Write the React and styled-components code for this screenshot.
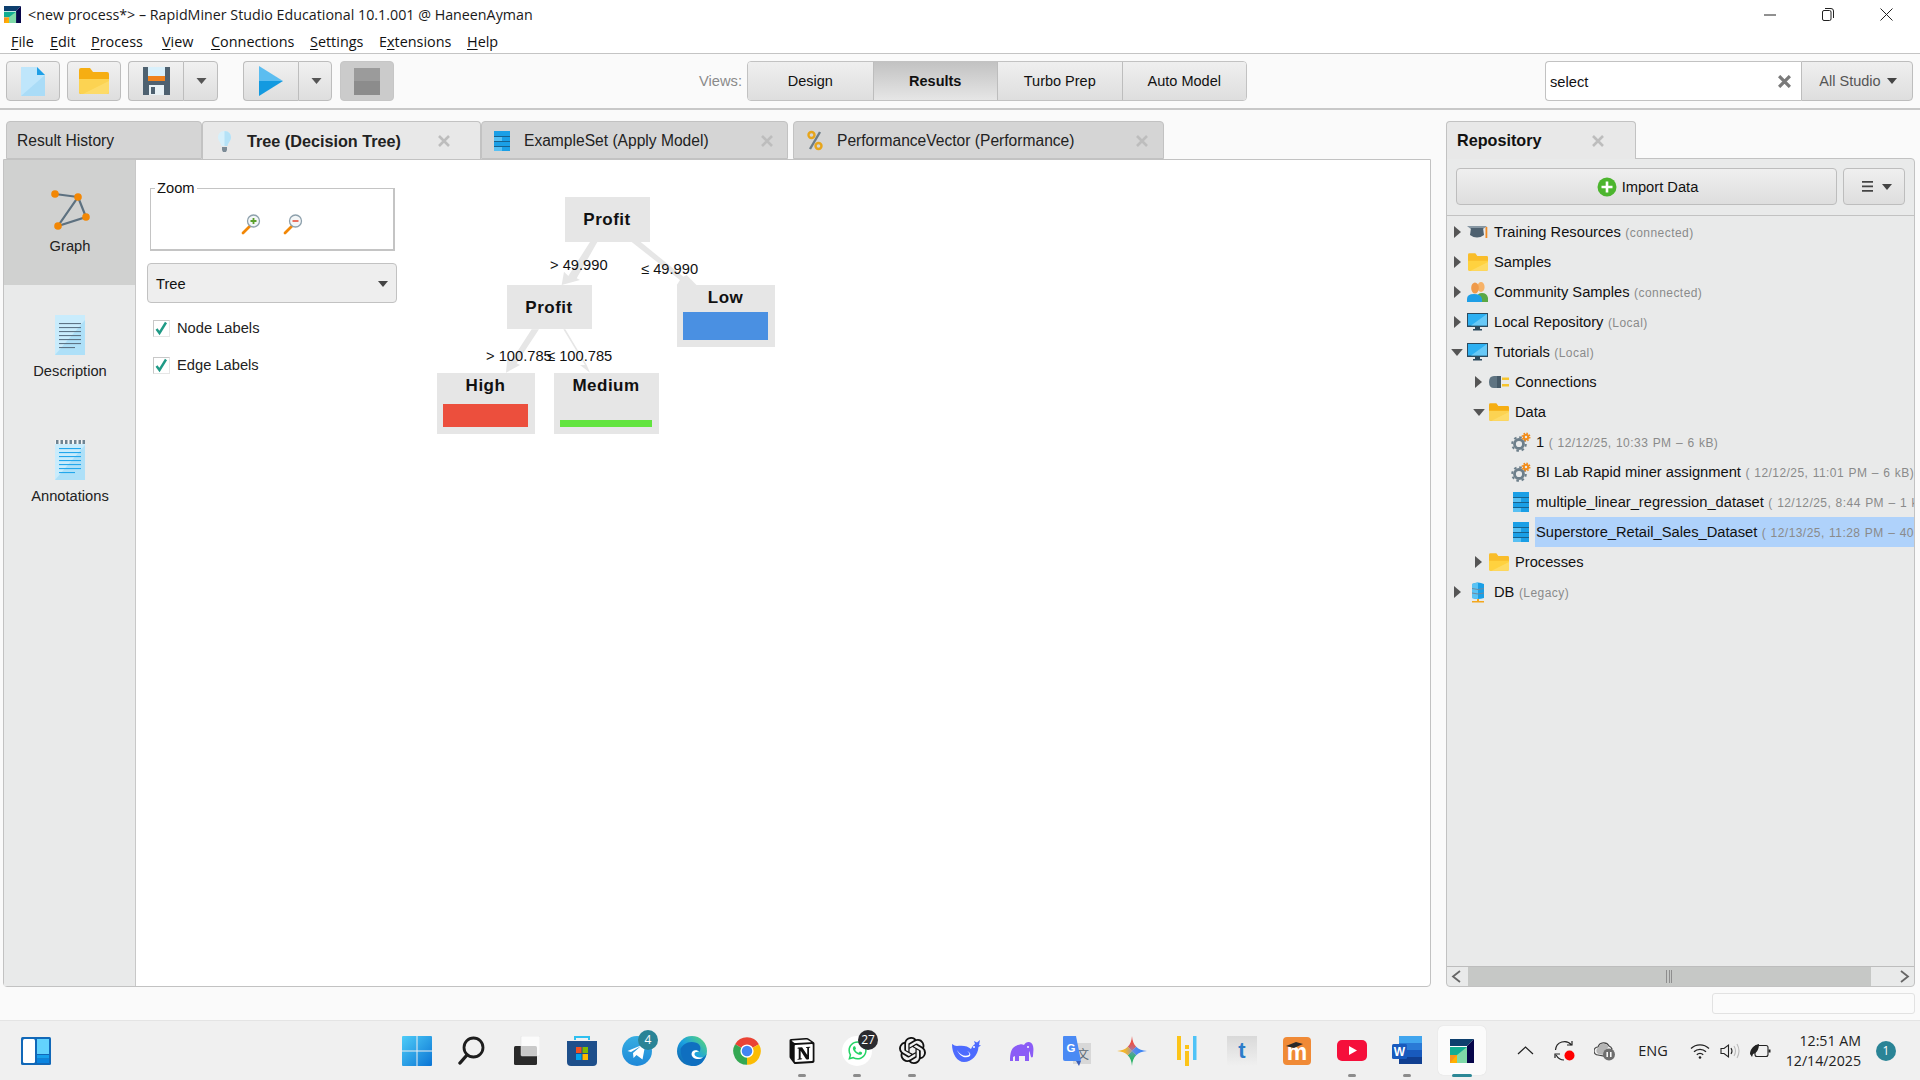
import React from "react";
import styled, { createGlobalStyle } from "styled-components";
import { SiNotion, SiOpenai } from "react-icons/si";
import { FaWhatsapp } from "react-icons/fa";

const Global = createGlobalStyle`
  html, body { margin: 0; padding: 0; background: #fafafa; }
  body { width: 1920px; height: 1080px; overflow: hidden; font-family: "Liberation Sans", Arial, sans-serif; color: #111; }
  * { box-sizing: border-box; }
`;

const Page = styled.div`display: flex; flex-direction: column; width: 1920px; height: 1080px; overflow: hidden;`;

/* ---------- title + menu ---------- */
const TitleBar = styled.div`display: flex; align-items: center; height: 29px; background: #fff; padding: 0 5px 0 4px; flex: none;`;
const TitleText = styled.span`font: 14.28px "Open Sans", sans-serif; margin: -1px 0 0 7px; color: #1a1a1a; white-space: nowrap;`;
const WindowButtons = styled.div`display: flex; margin-left: auto; height: 29px;`;
const WindowButton = styled.div`width: 58px; display: flex; align-items: center; justify-content: center; color: #222;`;
const MenuBar = styled.div`display: flex; height: 25px; padding: 2px 0 1px 0; background: #fff; border-bottom: 1px solid #c4c4c4; flex: none; align-items: center;`;
const MenuItem = styled.span`font: 14.4px "Open Sans", sans-serif; color: #111; position: absolute; left: ${p => p.$x}px; u { text-decoration-thickness: 1px; text-underline-offset: 2px; }`;
const MenuRow = styled.div`position: relative; height: 20px; width: 100%; line-height: 20px;`;

/* ---------- toolbar ---------- */
const Toolbar = styled.div`display: flex; align-items: center; height: 56px; padding: 0 7px 0 6px; background: #fafafa; border-bottom: 2px solid #c8c8c8; flex: none;`;
const ToolButton = styled.button`
  width: ${p => p.$w || 54}px; height: 40px; padding: 0 0 0 ${p => p.$pl || 0}px; margin-left: ${p => p.$ml || 0}px;
  display: flex; align-items: center; justify-content: center;
  border: 1px solid #bdbdbd; border-radius: 4px;
  background: linear-gradient(#f1f1f1, #dedede);
`;
const StopButton = styled(ToolButton)`background: #cbcbcb; border-color: #c6c6c6;`;
const SplitGroup = styled.div`display: flex; margin-left: ${p => p.$ml}px;
  & > button:first-child { border-radius: 4px 0 0 4px; border-right: 0; }
  & > button:last-child { border-radius: 0 4px 4px 0; }
`;
const ViewsLabel = styled.span`margin-left: 305px; width: 48px; font-size: 14.7px; color: #8a8a8a;`;
const ViewGroup = styled.div`display: flex; height: 40px; border: 1px solid #c2c2c2; border-radius: 4px; overflow: hidden; width: 500px;`;
const ViewButton = styled.div`
  width: 125px; display: flex; align-items: center; justify-content: center; font-size: 14.5px;
  font-weight: ${p => (p.$active ? 700 : 400)};
  background: ${p => (p.$active ? "linear-gradient(#c2c2c2, #e6e6e6)" : "linear-gradient(#efefef, #dedede)")};
  border-left: ${p => (p.$first ? "0" : "1px solid #bdbdbd")};
`;
const SearchBox = styled.div`display: flex; align-items: center; width: 256px; height: 40px; margin-left: 298px; background: #fff; border: 1px solid #c2c2c2; border-right: 0; border-radius: 4px 0 0 4px; padding: 0 10px 0 4px;`;
const SearchInput = styled.input`flex: 1; min-width: 0; border: 0; outline: 0; background: transparent; font: 14.7px "Liberation Sans", sans-serif; color: #111; padding: 1px 0 0;`;
const ScopeButton = styled.div`width: 112px; height: 40px; display: flex; align-items: center; justify-content: center; gap: 6px; padding-left: 2px; font-size: 14.5px; color: #555; border: 1px solid #bdbdbd; border-radius: 0 4px 4px 0; background: linear-gradient(#efefef, #dedede);`;

/* ---------- workspace ---------- */
const Workspace = styled.div`flex: 1; min-height: 0; display: flex; padding: 11px 5px 0 3px; background: #fafafa;`;
const ResultsColumn = styled.div`width: 1428px; display: flex; flex-direction: column;`;
const TabStrip = styled.div`display: flex; height: 38px; flex: none; padding-left: 3px;`;
const Tab = styled.div`
  display: flex; align-items: center; width: ${p => p.$w}px; height: 38px; margin-left: ${p => p.$ml || 0}px;
  padding: 1px ${p => p.$pr || 16}px 0 ${p => p.$pl || 12}px;
  background: ${p => (p.$active ? "#e8e8e8" : "#d5d5d5")};
  border: 1px solid #c2c2c2; border-bottom: ${p => (p.$active ? "0" : "1px solid #c2c2c2")}; border-radius: 4px 4px 0 0;
  font-size: ${p => (p.$active ? 16.2 : 15.6)}px; font-weight: ${p => (p.$active ? 700 : 400)}; white-space: nowrap; color: #222;
`;
const TabIcon = styled.span`width: 30px; display: flex; align-items: center; flex: none;`;
const TabClose = styled.span`margin-left: auto; display: flex;`;
const ResultPanel = styled.div`flex: 1; min-height: 0; display: flex; background: #fff; border: 1px solid #c2c2c2; border-radius: 0 0 4px 4px;`;
const SideNav = styled.div`width: 132px; flex: none; background: #e9eaea; border-right: 1px solid #c8c8c8;`;
const SideItem = styled.div`height: 125px; display: flex; flex-direction: column; align-items: center; padding: 30px 0 0 1px; background: ${p => (p.$active ? "#d0d1d0" : "transparent")}; font-size: 14.7px; color: #222;`;
const SideLabel = styled.span`margin-top: 8px;`;
const Controls = styled.div`width: 265px; flex: none; padding: 19px 0 0 11px; display: flex; flex-direction: column;`;
const ZoomBox = styled.fieldset`
  margin: 0 0 0 3px; padding: 0; width: 245px; height: 72px; border: 2px solid #c4c4c4; border-width: 1px 2px 2px 1px;
  display: flex; min-inline-size: 0;
  legend { font-size: 14.7px; margin-left: 4px; padding: 0 2px; line-height: 18px; }
`;
const ZoomIcons = styled.div`display: flex; gap: 22px; padding: 17px 0 0 90px;`;
const SelectBox = styled.div`display: flex; align-items: center; justify-content: space-between; width: 250px; height: 40px; margin-top: 12px; padding: 2px 8px 0 8px; background: #eee; border: 1px solid #c2c2c2; border-radius: 4px; font-size: 14.7px;`;
const CheckRow = styled.div`display: flex; align-items: center; gap: 7px; height: 18px; margin: ${p => p.$mt}px 0 0 6px; font-size: 14.7px; color: #222;`;
const CheckMark = styled.span`display: flex; width: 17px; height: 17px; background: #fff; border: 1px solid #c8c8c8; border-right-color: #e6e6e6; border-bottom-color: #e6e6e6;`;

const TreeCanvas = styled.div`position: relative; flex: 1;`;
const EdgeLayer = styled.svg`position: absolute; left: 19px; top: 20px;`;
const TreeNode = styled.div`
  position: absolute; left: ${p => p.$x}px; top: ${p => p.$y}px; width: ${p => p.$w}px; height: ${p => p.$h}px;
  display: flex; flex-direction: column; align-items: center; background: #e6e6e6;
  font-size: 17px; font-weight: 700; letter-spacing: 0.5px; color: #111; line-height: 24px;
  padding: ${p => p.$pt}px 7px 0 6px;
`;
const LeafBar = styled.div`margin-top: auto; margin-bottom: ${p => p.$mb}px; width: 100%; height: ${p => p.$h}px; background: ${p => p.$c};`;
const EdgeLabel = styled.span`position: absolute; left: ${p => p.$x}px; top: ${p => p.$y}px; font-size: 14.7px; line-height: 16px; white-space: nowrap; color: #111;`;

/* ---------- repository ---------- */
const RepoColumn = styled.div`width: 469px; margin-left: 15px; display: flex; flex-direction: column;`;
const RepoTab = styled.div`display: flex; align-items: center; width: 190px; height: 38px; flex: none; padding: 0 31px 0 10px; background: #e8e8e8; border: 1px solid #c2c2c2; border-bottom: 0; border-radius: 4px 4px 0 0; font-size: 16.2px; font-weight: 700; position: relative; z-index: 1; margin-bottom: -1px;`;
const RepoPanel = styled.div`flex: 1; min-height: 0; display: flex; flex-direction: column; background: #e9eaea; border: 1px solid #c2c2c2; border-radius: 0 4px 4px 4px;`;
const RepoActions = styled.div`display: flex; gap: 6px; height: 57px; flex: none; padding: 9px 9px 10px 9px; border-bottom: 1px solid #c2c2c2;`;
const ImportButton = styled.div`flex: 1; display: flex; align-items: center; justify-content: center; gap: 5px; padding-left: 2px; background: linear-gradient(#efefef, #dedede); border: 1px solid #bdbdbd; border-radius: 4px; font-size: 14.7px;`;
const RepoMenuButton = styled.div`width: 62px; display: flex; align-items: center; justify-content: center; gap: 9px; padding-left: 5px; background: linear-gradient(#efefef, #dedede); border: 1px solid #bdbdbd; border-radius: 4px;`;
const RepoTree = styled.div`flex: 1; min-height: 0; padding-top: 1px; overflow: hidden;`;
const RepoRow = styled.div`display: flex; align-items: center; height: 30px; padding-left: ${p => 2 + p.$level * 21.5}px; white-space: nowrap; overflow: hidden;`;
const CaretCell = styled.span`width: 16px; flex: none; display: flex; justify-content: center;`;
const RowIcon = styled.span`width: 24px; flex: none; display: flex; justify-content: center; align-items: center; margin-right: 3px; padding-left: 1px;`;
const RowLabel = styled.span`flex: 1; min-width: 0; height: 30px; line-height: 31px; padding-left: ${p => (p.$level === 2 ? 1 : p.$level === 1 ? 1.5 : 2)}px; font-size: 14.7px; color: #111; overflow: hidden; background: ${p => (p.$selected ? "#afd2fb" : "transparent")};`;
const RowMeta = styled.span`font-size: 12px; letter-spacing: 0.45px; word-spacing: 0.6px; color: #8a8a8a; margin-left: 4.5px;`;
const HScroll = styled.div`display: flex; height: 20px; flex: none; border-top: 1px solid #bdbdbd; align-items: stretch;`;
const ScrollEnd = styled.div`width: ${p => p.$w}px; display: flex; align-items: center; justify-content: ${p => p.$j}; padding: 0 4px; flex: ${p => (p.$grow ? 1 : "none")};`;
const ScrollThumb = styled.div`width: 403px; background: #c6c8c6; display: flex; align-items: center; justify-content: center;`;
const Grip = styled.div`width: 8px; height: 13px; background: repeating-linear-gradient(90deg, #8e8e8e 0 1px, transparent 1px 2.6px);`;

/* ---------- status + taskbar ---------- */
const StatusBar = styled.div`display: flex; justify-content: flex-end; height: 33px; flex: none; padding: 6px 5px 0 0; background: #fafafa;`;
const StatusField = styled.div`width: 203px; height: 21px; border: 1px solid #e2e2e2; border-radius: 3px; background: #fbfbfb;`;
const Taskbar = styled.div`display: flex; align-items: center; height: 60px; flex: none; background: #f0f0f0; border-top: 1px solid #e4e4e4;`;
const TaskCell = styled.div`position: relative; width: 55px; height: 59px; flex: none; display: flex; align-items: center; justify-content: center; margin-left: ${p => p.$ml || 0}px;`;
const ActiveBack = styled.div`position: absolute; left: 3px; right: 4px; top: 5px; bottom: 5px; background: #fbfbfb; border-radius: 5px; box-shadow: 0 0 1px #ccc;`;
const IconHolder = styled.div`position: relative; display: flex; color: ${p => p.$c || "inherit"};`;
const RunDot = styled.div`position: absolute; left: 50%; bottom: 3px; width: ${p => (p.$active ? 20 : 8)}px; height: 3px; margin-left: ${p => (p.$active ? -10 : -4)}px; border-radius: 2px; background: ${p => (p.$active ? "#2c8896" : "#8c8c8c")};`;
const Badge = styled.div`position: absolute; right: -6px; top: -6px; width: 20px; height: 20px; border-radius: 50%; display: flex; align-items: center; justify-content: center; background: ${p => (p.$d ? "#2b2b30" : "#2a8496")}; color: #fff; font: 12px "Open Sans", sans-serif;`;
const WhiteDisc = styled.div`width: 30px; height: 30px; border-radius: 50%; background: #fff; display: flex; align-items: center; justify-content: center; color: #25d366;`;
const NotionTile = styled.div`display: flex; background: linear-gradient(#fff, #fff) center / 20px 20px no-repeat;`;
const GreyTile = styled.div`width: 30px; height: 30px; background: linear-gradient(#d9d9d9, #f0f0f0); display: flex; align-items: center; justify-content: center; color: #2c7cc9; font: 700 22px "Liberation Sans", sans-serif;`;
const TrayCell = styled.div`width: ${p => p.$w}px; height: 59px; flex: none; display: flex; align-items: center; justify-content: center; margin-left: ${p => p.$ml || 0}px;`;
const TrayText = styled.span`font: 14.5px "Open Sans", sans-serif; color: #222;`;
const Clock = styled.div`width: 86px; flex: none; text-align: right; font: 14.2px/20px "Open Sans", sans-serif; color: #222; white-space: nowrap; display: flex; flex-direction: column;`;
const NotifyBadge = styled.div`width: 20px; height: 20px; margin-left: 15px; flex: none; border-radius: 50%; background: #2a8496; color: #fff; display: flex; align-items: center; justify-content: center; font: 12px "Open Sans", sans-serif;`;

/* ---------- icons ---------- */
const CaretDown = ({ w = 11, h = 6, c = "#555" }) => <svg width={w} height={h} viewBox="0 0 10 6"><path d="M0 0h10L5 6z" fill={c} /></svg>;
const CaretRight = () => <svg width="7" height="12" viewBox="0 0 7 12"><path d="M0 0l7 6-7 6z" fill="#555" /></svg>;
const CloseX = ({ s = 12, c = "#bdbdbd", w = 2.6 }) => <svg width={s} height={s} viewBox="0 0 12 12"><path d="M1 1l10 10M11 1L1 11" stroke={c} strokeWidth={w} /></svg>;
const AppLogo = ({ s = 24 }) => (
  <svg width={s} height={s} viewBox="0 0 24 24">
    <rect x="0" y="0" width="24" height="24" fill="#fff" />
    <path d="M0 0h24L17 7H0z" fill="#0d3f6e" />
    <path d="M24 0v24h-7V7z" fill="#07064a" />
    <path d="M0 8h17v16H7v-8H0z" fill="#12ad92" />
    <path d="M7 16l10-8v16H7z" fill="#7fd9a8" />
    <path d="M0 16h7v8H0z" fill="#f7931e" />
    <path d="M0 24l7-8v8z" fill="#ffb000" />
  </svg>
);
const NewDoc = () => <svg width="24" height="29" viewBox="0 0 24 29"><path d="M0 0h16l8 8v21H0z" fill="#bfe6fb" /><path d="M24 8v21H0z" fill="#aadcf7" /><path d="M16 0l8 8h-8z" fill="#1f9fe6" /></svg>;
const FolderIcon = ({ w = 30, h = 26, top = "#f6ae12", bottom = "#fcd352" }) => (
  <svg width={w} height={h} viewBox="0 0 30 26"><path d="M0 2q0-2 2-2h9l3 4h14q2 0 2 2v18q0 2-2 2H2q-2 0-2-2z" fill={top} /><path d="M0 11h30v13q0 2-2 2H2q-2 0-2-2z" fill={bottom} /><path d="M30 13L4 26h24q2 0 2-2z" fill="#fde17a" opacity=".6" /></svg>
);
const SaveIcon = () => <svg width="27" height="28" viewBox="0 0 27 28"><path d="M0 0h27v28H0z" fill="#4e6170" /><path d="M5 0h17v14H5z" fill="#d9f0fb" /><path d="M5 9h17v5H5z" fill="#f0821e" /><path d="M6 18h15v10H6z" fill="#e8f1f5" /><path d="M8 20h4v7H8z" fill="#4e6170" /></svg>;
const PlayIcon = () => <svg width="24" height="30" viewBox="0 0 24 30"><path d="M0 0l24 15H0z" fill="#5bbdf0" /><path d="M0 30l24-15H0z" fill="#139ae0" /></svg>;
const StopIcon = () => <svg width="26" height="27" viewBox="0 0 26 27"><path d="M0 0h26v13H0z" fill="#9b9b9b" /><path d="M0 13h26v14H0z" fill="#8c8c8c" /></svg>;
const BulbIcon = () => <svg width="15" height="21" viewBox="0 0 15 21"><path d="M7.5 0C3 0 1 3 1 6.5c0 3.500 3 5 3.500 8.500h6C11 11.500 14 10 14 6.500 14 3 12 0 7.500 0z" fill="#d7f0fb" /><path d="M7.500 0C12 0 14 3 14 6.500c0 3.500-3 5-3.500 8.500h-3z" fill="#b5e2f7" /><path d="M5 16h5v3l-1 2H6l-1-2z" fill="#7c8b96" /></svg>;
const TableIcon = ({ w = 16, h = 20 }) => <svg width={w} height={h} viewBox="0 0 16 20"><path d="M0 0h16v20H0z" fill="#1a9fe6" /><path d="M0 5h8v5H0zM0 15h8v5H0z" fill="#57c0f3" /><path d="M0 5h16v.9H0zM0 10h16v.9H0zM0 15h16v.9H0z" fill="#16628f" /></svg>;
const PercentIcon = () => <svg width="16" height="21" viewBox="0 0 16 21"><circle cx="4.500" cy="5" r="3" fill="none" stroke="#e7a51b" strokeWidth="2.400" /><circle cx="11.500" cy="16" r="3" fill="none" stroke="#e7a51b" strokeWidth="2.400" /><path d="M13 2L3 19" stroke="#6d7d87" strokeWidth="2.400" /></svg>;
const GraphIcon = () => (
  <svg width="40" height="40" viewBox="0 0 40 40"><g stroke="#5d7180" strokeWidth="2.200" fill="none"><path d="M5 4l23 3-20 29 28-9-8-20" /></g><g fill="#f28705"><circle cx="5" cy="4" r="3.800" /><circle cx="28" cy="7" r="3.800" /><circle cx="8" cy="36" r="3.800" /><circle cx="36" cy="27" r="3.800" /></g></svg>
);
const LinesDoc = ({ lines = "#5e7486", top }) => (
  <svg width="30" height="40" viewBox="0 0 30 40">
    <path d="M0 0h30v40H0z" fill="#c9ecfc" /><path d="M30 5v35H0z" fill="#aee0f8" />
    {top && <path d="M0 0h30v4H0z" fill="#f5f5f5" />}
    {top && <path d="M1 0h2.500v4H1zM5.500 0H8v4H5.500zM10 0h2.500v4H10zM14.500 0H17v4h-2.500zM19 0h2.500v4H19zM23.500 0H26v4h-2.500zM27.500 0H30v4h-2.500z" fill="#6f8492" />}
    {[8, 12, 16, 20, 24, 28, 32].map((y, i) => <path key={y} d={`M4 ${y}h${i === 6 ? 16 : 22}v1.100H4z`} fill={lines} />)}
  </svg>
);
const ZoomLens = ({ plus }) => (
  <svg width="20" height="21" viewBox="0 0 20 21"><path d="M2 19l7-7" stroke="#f28705" strokeWidth="2.800" strokeLinecap="round" /><circle cx="12.500" cy="7" r="6" fill="#f3f6f7" stroke="#8da0ac" strokeWidth="1.300" /><path d={plus ? "M9.500 7h6M12.500 4v6" : "M9.500 7h6"} stroke={plus ? "#5aa02c" : "#e8604c"} strokeWidth="1.800" /></svg>
);
const CheckIcon = () => <svg width="15" height="15" viewBox="0 0 15 15"><path d="M2.500 8l3 4L12 1.500" fill="none" stroke="#1f9a86" strokeWidth="2.400" /></svg>;
const PlusCircle = () => <svg width="20" height="20" viewBox="0 0 20 20"><circle cx="10" cy="10" r="9.500" fill="#4cb52e" /><path d="M10 4.500v11M4.500 10h11" stroke="#fff" strokeWidth="2.600" /></svg>;
const Hamburger = () => <svg width="11" height="11" viewBox="0 0 11 11"><path d="M0 0h11v1.800H0zM0 4.500h11v1.800H0zM0 9h11v1.800H0z" fill="#444" /></svg>;
const CapIcon = () => <svg width="21" height="14" viewBox="0 0 21 14"><path d="M0 1h20l-5 4H5z" fill="#8797a3" /><path d="M4 3h12l1 7q-7 5-14 0z" fill="#4e6170" /><path d="M18.500 2h1.800v11h-1.800z" fill="#f08a24" /></svg>;
const PeopleIcon = () => <svg width="21" height="20" viewBox="0 0 21 20"><ellipse cx="14" cy="5" rx="3.600" ry="5" fill="#f7b267" /><path d="M10 20v-4q0-5 5-5t6 5v4z" fill="#5aa845" /><ellipse cx="8" cy="6" rx="3.800" ry="5.500" fill="#ef9a4a" /><path d="M0 20v-3q0-5 7-5t8 5v3z" fill="#1f9fe6" /></svg>;
const Monitor = () => <svg width="21" height="18" viewBox="0 0 21 18"><path d="M0 0h21v14H0z" fill="#2c4a5e" /><path d="M1 1h19v11.500H1z" fill="#2db0f2" /><path d="M20 1v11.500H4z" fill="#7cd2f8" opacity=".75" /><path d="M8 14h5v2h2v1.500H6V16h2z" fill="#2c4a5e" /></svg>;
const PlugIcon = () => <svg width="21" height="14" viewBox="0 0 21 14"><path d="M5 1h7v12H5Q0 13 0 7t5-6z" fill="#5f7482" /><path d="M8 1h4v12H8z" fill="#465a68" /><path d="M13 2.500h7v2.400h-7zM13 9h7v2.400h-7z" fill="#f7c52e" /></svg>;
const GearIcon = () => (
  <svg width="20" height="20" viewBox="0 0 20 20">
    <circle cx="8" cy="12" r="4.500" fill="#e9eaea" stroke="#6d7f8b" strokeWidth="2.800" />
    <circle cx="8" cy="12" r="6.800" fill="none" stroke="#6d7f8b" strokeWidth="2" strokeDasharray="2.600 2.740" />
    <circle cx="15" cy="5" r="2.200" fill="none" stroke="#f28c1a" strokeWidth="2" />
    <circle cx="15" cy="5" r="3.800" fill="none" stroke="#f28c1a" strokeWidth="1.400" strokeDasharray="1.500 1.480" />
  </svg>
);
const DbIcon = () => <svg width="14" height="21" viewBox="0 0 14 21"><path d="M1 2q6-3 12 0v14q-6 2-12 0z" fill="#1a9fe6" /><path d="M1 2q3-1.500 6-1.500V17q-3 0-6-1z" fill="#5ac3f4" /><path d="M1 6.500q6 2 12 0M1 11q6 2 12 0" stroke="#6d8aa0" strokeWidth="1" fill="none" /><path d="M6 17h2v2h5v1.500H1V19h5z" fill="#f3a71f" /></svg>;

const Widgets = () => <svg width="30" height="28" viewBox="0 0 30 28"><rect width="30" height="28" rx="1.500" fill="#1168b8" /><rect x="2" y="2" width="12" height="24" rx="1.500" fill="#fff" /><path d="M16 2h12v15H16z" fill="#63d3fd" /><path d="M16 18h12v3.500H16z" fill="#16a0ec" /><path d="M16 22h12v4H16z" fill="#0a84e0" /></svg>;
const StartIcon = () => (
  <svg width="30" height="30" viewBox="0 0 30 30"><defs><linearGradient id="ws" x1="0" y1="0" x2="1" y2="1"><stop offset="0" stopColor="#4fcdf8" /><stop offset="1" stopColor="#0a74d4" /></linearGradient></defs><path d="M1 0h13.500v14.500H0V1q0-1 1-1zM15.500 0H29q1 0 1 1v13.500H15.500zM0 15.500h14.500V30H1q-1 0-1-1zM15.500 15.500H30V29q0 1-1 1H15.500z" fill="url(#ws)" /></svg>
);
const SearchGlyph = () => <svg width="28" height="30" viewBox="0 0 28 30"><circle cx="15.500" cy="11.500" r="9.500" fill="none" stroke="#1d1d1d" strokeWidth="2.800" /><path d="M9 19L2 27" stroke="#1d1d1d" strokeWidth="3.400" strokeLinecap="round" /></svg>;
const TaskView = () => <svg width="26" height="29" viewBox="0 0 26 29"><rect x="0" y="10" width="23" height="19" rx="1.500" fill="#2a2a2a" /><rect x="7" y="0" width="19" height="20" rx="1" fill="#ffffff" fillOpacity=".75" stroke="#dcdcdc" strokeWidth=".5" /></svg>;
const StoreIcon = () => <svg width="30" height="30" viewBox="0 0 30 30"><path d="M8 4V1h14v3" fill="none" stroke="#2fc0f0" strokeWidth="2" /><path d="M0 5h30v21q0 4-4 4H4q-4 0-4-4z" fill="#1e4f8b" /><rect x="9" y="11" width="5.500" height="6" fill="#f25022" /><rect x="15.500" y="11" width="5.500" height="6" fill="#7fba00" /><rect x="9" y="18" width="5.500" height="6" fill="#00a4ef" /><rect x="15.500" y="18" width="5.500" height="6" fill="#ffb900" /></svg>;
const TelegramIcon = () => <svg width="30" height="30" viewBox="0 0 30 30"><defs><linearGradient id="tg" x1="0" y1="0" x2="0" y2="1"><stop offset="0" stopColor="#37aee2" /><stop offset="1" stopColor="#1e88d8" /></linearGradient></defs><circle cx="15" cy="15" r="15" fill="url(#tg)" /><path d="M5.500 15l18-7.500-3 16-6-4.500-3 3-.5-5 8-7-10 6z" fill="#fff" /></svg>;
const EdgeIcon = () => (
  <svg width="30" height="30" viewBox="0 0 30 30"><defs><linearGradient id="eg" x1="0" y1="1" x2="1" y2="0"><stop offset="0" stopColor="#0c59a4" /><stop offset=".5" stopColor="#1ba1e2" /><stop offset="1" stopColor="#5fdc6b" /></linearGradient></defs><circle cx="15" cy="15" r="15" fill="url(#eg)" /><path d="M29.500 18c-3 5-9 6-12.500 4-3-1.800-3-5.500-1-7 2-1.600 6-1 6.500 1 3-6-1-10-8-10-5 0-9 3-11 7 0 10 6 17 14 17 6 0 10-5 12-12z" fill="#0f6fc0" /><path d="M16 15c-2 1.500-2 5.200 1 7 2 1.200 6 1.700 9-.5-5 .5-8.500-1-8.500-3.500 0-1.500 2-2.500 4.500-2-1-2-4.500-2.300-6-1z" fill="#fff" /></svg>
);
const ChromeIcon = () => (
  <svg width="30" height="30" viewBox="0 0 24 24"><path d="M2.470 6.500A11 11 0 0 1 21.530 6.500L12 12z" fill="#ea4335" /><path d="M21.530 6.500A11 11 0 0 1 12 23L12 12z" fill="#fbbc05" /><path d="M12 23A11 11 0 0 1 2.470 6.500L12 12z" fill="#34a853" /><circle cx="12" cy="12" r="5.300" fill="#fff" /><circle cx="12" cy="12" r="4.200" fill="#4285f4" /></svg>
);
const WhaleIcon = () => (
  <svg width="30" height="24" viewBox="0 0 30 24">
    <path d="M0 5c2 1 3 2 5 2 6-1 11 0 14 3 1-2 2-4 4-5l-1-3 3 1.500L28 1l-1 5 2 .5-2.500 1.500C26 16 20 23 12 23 5 23 0 15 0 5z" fill="#4d6bfe" />
    <path d="M5 11c3 5 8 7 12 5 1-1 0-3-2-4 3 1 4 3 3 5-4 3-10 1-13-6z" fill="#fff" />
    <circle cx="22" cy="8" r="1" fill="#fff" />
  </svg>
);
const ElephantIcon = () => <svg width="24" height="24" viewBox="0 0 24 24"><path d="M0 22c0-8 1-14 8-16 3-1 4-1 6 0 2-4 8-4 9 1 1 4 0 7 0 10 0 1-1 2-2 1-1-3-1-5-2-6v10h-4v-5H9v5H5v-5l-2 1v4H1z" fill="#8b5cf6" /><circle cx="18" cy="8" r="1" fill="#fff" /></svg>;
const GTranslateIcon = () => (
  <svg width="28" height="30" viewBox="0 0 28 30"><rect x="10" y="7" width="18" height="21" fill="#d8d8d8" /><text x="14" y="23" fontSize="12" fontFamily="Noto Sans CJK SC, sans-serif" fill="#5c6b77">文</text><path d="M0 1q0-1 1-1h12l5 25H2q-2 0-2-2z" fill="#4a8af4" /><path d="M13 25l3 5 2-5z" fill="#3b5fb8" /><text x="3.500" y="16" fontSize="11.500" fontWeight="700" fontFamily="Liberation Sans, sans-serif" fill="#fff">G</text></svg>
);
const GeminiIcon = () => (
  <svg width="30" height="30" viewBox="0 0 24 24">
    <defs>
      <clipPath id="gc"><path d="M12 0C12.500 7.500 16.500 11.500 24 12 16.500 12.500 12.500 16.500 12 24 11.500 16.500 7.500 12.500 0 12 7.500 11.500 11.500 7.500 12 0Z" /></clipPath>
      <radialGradient id="gb" cx=".5" cy=".5" r=".25"><stop offset="0" stopColor="#7a8fd8" stopOpacity=".7" /><stop offset="1" stopColor="#7a8fd8" stopOpacity="0" /></radialGradient>
    </defs>
    <g clipPath="url(#gc)">
      <path d="M12 12L0 0h24z" fill="#e8524a" /><path d="M12 12L24 0v24z" fill="#3f86f4" />
      <path d="M12 12l12 12H0z" fill="#2fb36a" /><path d="M12 12L0 24V0z" fill="#f5b62a" />
      <rect width="24" height="24" fill="url(#gb)" />
    </g>
  </svg>
);
const BarsIcon = () => <svg width="20" height="30" viewBox="0 0 20 30"><rect x="0" y="0" width="4" height="24" fill="#fcc419" /><rect x="16" y="0" width="3.500" height="24" fill="#4fc3f7" /><rect x="8" y="9" width="4" height="4" fill="#fcc419" /><rect x="8" y="15" width="4" height="15" fill="#fcc419" /></svg>;
const MoodleIcon = () => (
  <svg width="28" height="28" viewBox="0 0 28 28"><rect width="28" height="28" rx="4" fill="#f08a36" /><text x="14" y="23" textAnchor="middle" fontSize="23" fontWeight="700" fontFamily="Liberation Sans, sans-serif" fill="#fff">m</text><path d="M3 9l10-4 7 2-9 4z" fill="#2a2a2a" /></svg>
);
const YoutubeIcon = () => <svg width="30" height="21" viewBox="0 0 30 21"><rect width="30" height="21" rx="5" fill="#f50f3b" /><path d="M12 6l8 4.500-8 4.500z" fill="#fff" /></svg>;
const WordIcon = () => (
  <svg width="30" height="29" viewBox="0 0 30 29"><rect x="7" y="0" width="23" height="28" rx="1.500" fill="#2a7ad6" /><path d="M7 0h23v7H7z" fill="#41a5ee" /><path d="M7 14h23v7H7z" fill="#185abd" /><path d="M7 21h23v7H7z" fill="#103f91" /><rect x="0" y="8" width="15" height="15" rx="1.500" fill="#185abd" /><text x="7.500" y="20" textAnchor="middle" fontSize="12" fontWeight="700" fontFamily="Liberation Sans, sans-serif" fill="#fff">W</text></svg>
);
const Chevron = () => <svg width="17" height="9" viewBox="0 0 17 9"><path d="M1 8l7.500-7L16 8" fill="none" stroke="#222" strokeWidth="1.200" /></svg>;
const SyncIcon = () => <svg width="22" height="22" viewBox="0 0 22 22"><path d="M1.500 10a9 9 0 0 1 16-5" fill="none" stroke="#222" strokeWidth="1.200" /><path d="M13 5h5V1M1 18v-4h5" fill="none" stroke="#222" strokeWidth="1.200" /><path d="M2 15q3 5 8 5" fill="none" stroke="#222" strokeWidth="1.200" /><circle cx="15.500" cy="15.500" r="5" fill="#f00" /></svg>;
const CloudIcon = () => <svg width="22" height="20" viewBox="0 0 22 20"><path d="M4 14a4 4 0 0 1 0-8 6 6 0 0 1 11-1 5 5 0 0 1 3 3l-8 7z" fill="none" stroke="#444" strokeWidth="1.200" /><path d="M4.500 13a3.500 3.500 0 0 1 0-6.500 5.500 5.500 0 0 1 10-1L10 14z" fill="#b5b5b5" /><circle cx="15" cy="13.500" r="6" fill="#6e6e6e" /><path d="M13.200 11v5M16.800 11v5" stroke="#fff" strokeWidth="1.500" /></svg>;
const WifiIcon = () => <svg width="20" height="16" viewBox="0 0 20 16"><path d="M1 5.500a13 13 0 0 1 18 0M4 8.800a8.500 8.500 0 0 1 12 0M6.800 11.800a4.500 4.500 0 0 1 6.400 0" fill="none" stroke="#222" strokeWidth="1.300" /><circle cx="10" cy="14.500" r="1.300" fill="#222" /></svg>;
const SoundIcon = () => <svg width="21" height="16" viewBox="0 0 21 16"><path d="M1 5.500h3L8.500 2v12L4 10.500H1z" fill="none" stroke="#222" strokeWidth="1.100" /><path d="M11 5q2 3 0 6" fill="none" stroke="#222" strokeWidth="1.100" /><path d="M14 3q3 5 0 10M17 1q4 7 0 14" fill="none" stroke="#bbb" strokeWidth="1.100" /></svg>;
const BatteryIcon = () => <svg width="21" height="14" viewBox="0 0 21 14"><rect x="5" y="1.500" width="13" height="11" rx="2" fill="none" stroke="#222" strokeWidth="1.100" /><path d="M18.500 5.500h2v3h-2z" fill="#222" /><path d="M0 10c0-5 4-9 9-10 0 5-2 9-6 10l-1 3z" fill="#222" /></svg>;

/* ---------- data ---------- */
const menus = [
  { x: 11, pre: "", u: "F", post: "ile" }, { x: 50, pre: "", u: "E", post: "dit" },
  { x: 91, pre: "", u: "P", post: "rocess" }, { x: 162, pre: "", u: "V", post: "iew" },
  { x: 211, pre: "", u: "C", post: "onnections" }, { x: 310, pre: "", u: "S", post: "ettings" },
  { x: 379, pre: "E", u: "x", post: "tensions" }, { x: 467, pre: "", u: "H", post: "elp" },
];

const repo = [
  { level: 0, caret: "r", icon: <CapIcon />, name: "Training Resources", meta: "(connected)" },
  { level: 0, caret: "r", icon: <FolderIcon w={20} h={18} top="#f9bd2a" bottom="#ffd23f" />, name: "Samples" },
  { level: 0, caret: "r", icon: <PeopleIcon />, name: "Community Samples", meta: "(connected)" },
  { level: 0, caret: "r", icon: <Monitor />, name: "Local Repository", meta: "(Local)" },
  { level: 0, caret: "d", icon: <Monitor />, name: "Tutorials", meta: "(Local)" },
  { level: 1, caret: "r", icon: <PlugIcon />, name: "Connections" },
  { level: 1, caret: "d", icon: <FolderIcon w={20} h={18} />, name: "Data" },
  { level: 2, icon: <GearIcon />, name: "1", meta: "( 12/12/25, 10:33 PM – 6 kB)" },
  { level: 2, icon: <GearIcon />, name: "BI Lab Rapid miner assignment", meta: "( 12/12/25, 11:01 PM – 6 kB)" },
  { level: 2, icon: <TableIcon />, name: "multiple_linear_regression_dataset", meta: "( 12/12/25, 8:44 PM – 1 kB)" },
  { level: 2, icon: <TableIcon />, name: "Superstore_Retail_Sales_Dataset", meta: "( 12/13/25, 11:28 PM – 40 kB)", selected: true },
  { level: 1, caret: "r", icon: <FolderIcon w={20} h={18} top="#f9bd2a" bottom="#ffd23f" />, name: "Processes" },
  { level: 0, caret: "r", icon: <DbIcon />, name: "DB", meta: "(Legacy)" },
];

const taskItems = [
  { key: "start", el: <StartIcon /> }, { key: "search", el: <SearchGlyph /> },
  { key: "tv", el: <TaskView /> }, { key: "store", el: <StoreIcon /> },
  { key: "tg", el: <TelegramIcon />, badge: "4" }, { key: "edge", el: <EdgeIcon /> },
  { key: "chrome", el: <ChromeIcon /> },
  { key: "notion", el: <NotionTile><SiNotion size={26} color="#111" /></NotionTile>, run: true },
  { key: "wa", el: <WhiteDisc><FaWhatsapp size={21} /></WhiteDisc>, badge: "27", dark: true, run: true },
  { key: "gpt", el: <SiOpenai size={27} color="#111" />, run: true },
  { key: "ds", el: <WhaleIcon /> }, { key: "el", el: <ElephantIcon /> },
  { key: "gt", el: <GTranslateIcon /> }, { key: "gem", el: <GeminiIcon /> },
  { key: "bars", el: <BarsIcon /> }, { key: "t", el: <GreyTile>t</GreyTile> },
  { key: "moodle", el: <MoodleIcon /> }, { key: "yt", el: <YoutubeIcon />, run: true },
  { key: "word", el: <WordIcon />, run: true },
  { key: "rm", el: <AppLogo />, run: true, active: true },
];

export default function App() {
  return (
    <Page>
      <Global />
      <TitleBar>
        <AppLogo s={17} />
        <TitleText>&lt;new process*&gt; – RapidMiner Studio Educational 10.1.001 @ HaneenAyman</TitleText>
        <WindowButtons>
          <WindowButton><svg width="12" height="2"><path d="M0 1h12" stroke="#222" /></svg></WindowButton>
          <WindowButton><svg width="12" height="13" viewBox="0 0 12 13" fill="none" stroke="#222"><rect x=".5" y="2.500" width="8.500" height="10" rx="1.500" /><path d="M3 .5h6q2.500 0 2.500 2.500v7" /></svg></WindowButton>
          <WindowButton><svg width="13" height="13" viewBox="0 0 13 13"><path d="M.5.5l12 12M12.500.5l-12 12" stroke="#222" /></svg></WindowButton>
        </WindowButtons>
      </TitleBar>
      <MenuBar>
        <MenuRow>
          {menus.map(m => <MenuItem key={m.x} $x={m.x}>{m.pre}<u>{m.u}</u>{m.post}</MenuItem>)}
        </MenuRow>
      </MenuBar>

      <Toolbar>
        <ToolButton><NewDoc /></ToolButton>
        <ToolButton $ml={7}><FolderIcon /></ToolButton>
        <SplitGroup $ml={7}>
          <ToolButton $w={55}><SaveIcon /></ToolButton>
          <ToolButton $w={35} $pl={2}><CaretDown /></ToolButton>
        </SplitGroup>
        <SplitGroup $ml={25}>
          <ToolButton $w={55}><PlayIcon /></ToolButton>
          <ToolButton $w={34} $pl={2}><CaretDown /></ToolButton>
        </SplitGroup>
        <StopButton $ml={8}><StopIcon /></StopButton>
        <ViewsLabel>Views:</ViewsLabel>
        <ViewGroup>
          <ViewButton $first>Design</ViewButton>
          <ViewButton $active>Results</ViewButton>
          <ViewButton>Turbo Prep</ViewButton>
          <ViewButton>Auto Model</ViewButton>
        </ViewGroup>
        <SearchBox>
          <SearchInput defaultValue="select" readOnly />
          <CloseX s={13} c="#7a7a7a" w={3} />
        </SearchBox>
        <ScopeButton>All Studio <CaretDown w={10} h={6} c="#444" /></ScopeButton>
      </Toolbar>

      <Workspace>
        <ResultsColumn>
          <TabStrip>
            <Tab $w={196} $pl={10}>Result History</Tab>
            <Tab $w={279} $pl={14} $pr={30} $active><TabIcon><BulbIcon /></TabIcon>Tree (Decision Tree)<TabClose><CloseX /></TabClose></Tab>
            <Tab $w={307} $pl={12} $pr={14}><TabIcon><TableIcon /></TabIcon>ExampleSet (Apply Model)<TabClose><CloseX /></TabClose></Tab>
            <Tab $w={371} $ml={5} $pl={13} $pr={15}><TabIcon><PercentIcon /></TabIcon>PerformanceVector (Performance)<TabClose><CloseX /></TabClose></Tab>
          </TabStrip>
          <ResultPanel>
            <SideNav>
              <SideItem $active><GraphIcon /><SideLabel>Graph</SideLabel></SideItem>
              <SideItem><LinesDoc /><SideLabel>Description</SideLabel></SideItem>
              <SideItem><LinesDoc lines="#23a7ec" top /><SideLabel>Annotations</SideLabel></SideItem>
            </SideNav>
            <Controls>
              <ZoomBox>
                <legend>Zoom</legend>
                <ZoomIcons><ZoomLens plus /><ZoomLens /></ZoomIcons>
              </ZoomBox>
              <SelectBox>Tree <CaretDown w={10} h={8} c="#444" /></SelectBox>
              <CheckRow $mt={16}><CheckMark><CheckIcon /></CheckMark>Node Labels</CheckRow>
              <CheckRow $mt={19}><CheckMark><CheckIcon /></CheckMark>Edge Labels</CheckRow>
            </Controls>
            <TreeCanvas>
              <EdgeLayer width="380" height="270" viewBox="0 0 1140 810">
                <g fill="#e6e6e6">
                  <path d="M510 186H532L470 295 480 300 425 315 432 275 445 288z" />
                  <path d="M635 186H662L790 290 800 285 830 316H770L780 300z" />
                  <path d="M335 448H357L290 550 300 555 258 578 262 535 272 545z" />
                  <path d="M430 448H436L500 555 510 578 480 555 495 555z" />
                </g>
              </EdgeLayer>
              <TreeNode $x={164} $y={37} $w={85} $h={45} $pt={11}>Profit</TreeNode>
              <TreeNode $x={106} $y={125} $w={85} $h={44} $pt={11}>Profit</TreeNode>
              <TreeNode $x={276} $y={125} $w={98} $h={62} $pt={1}>Low<LeafBar $h={28} $c="#4a90e2" $mb={7} /></TreeNode>
              <TreeNode $x={36} $y={213} $w={98} $h={61} $pt={1}>High<LeafBar $h={23} $c="#ec4f3d" $mb={7} /></TreeNode>
              <TreeNode $x={153} $y={213} $w={105} $h={61} $pt={1}>Medium<LeafBar $h={7} $c="#62e43f" $mb={7} /></TreeNode>
              <EdgeLabel $x={149} $y={97}>&gt; 49.990</EdgeLabel>
              <EdgeLabel $x={240} $y={101}>≤ 49.990</EdgeLabel>
              <EdgeLabel $x={85} $y={188}>&gt; 100.785</EdgeLabel>
              <EdgeLabel $x={146} $y={188}>≤ 100.785</EdgeLabel>
            </TreeCanvas>
          </ResultPanel>
        </ResultsColumn>

        <RepoColumn>
          <RepoTab>Repository<TabClose><CloseX /></TabClose></RepoTab>
          <RepoPanel>
            <RepoActions>
              <ImportButton><PlusCircle />Import Data</ImportButton>
              <RepoMenuButton><Hamburger /><CaretDown w={10} h={6} c="#444" /></RepoMenuButton>
            </RepoActions>
            <RepoTree>
              {repo.map(r => (
                <RepoRow key={r.name} $level={r.level}>
                  <CaretCell>{r.caret === "r" ? <CaretRight /> : r.caret === "d" ? <CaretDown w={12} h={7} /> : null}</CaretCell>
                  <RowIcon>{r.icon}</RowIcon>
                  <RowLabel $selected={r.selected} $level={r.level}>{r.name}{r.meta && <RowMeta>{r.meta}</RowMeta>}</RowLabel>
                </RepoRow>
              ))}
            </RepoTree>
            <HScroll>
              <ScrollEnd $w={21} $j="flex-start"><svg width="11" height="13" viewBox="0 0 11 13"><path d="M9 1L2 6.500 9 12" fill="none" stroke="#666" strokeWidth="1.800" /></svg></ScrollEnd>
              <ScrollThumb><Grip /></ScrollThumb>
              <ScrollEnd $grow $j="flex-end"><svg width="11" height="13" viewBox="0 0 11 13"><path d="M2 1l7 5.500L2 12" fill="none" stroke="#666" strokeWidth="1.800" /></svg></ScrollEnd>
            </HScroll>
          </RepoPanel>
        </RepoColumn>
      </Workspace>

      <StatusBar><StatusField /></StatusBar>

      <Taskbar>
        <TaskCell $ml={8}><Widgets /></TaskCell>
        <TaskCell $ml={326.5}>{taskItems[0].el}</TaskCell>
        {taskItems.slice(1).map(t => (
          <TaskCell key={t.key}>
            {t.active && <ActiveBack />}
            <IconHolder>
              {t.el}
              {t.badge && <Badge $d={t.dark}>{t.badge}</Badge>}
            </IconHolder>
            {t.run && <RunDot $active={t.active} />}
          </TaskCell>
        ))}
        <TrayCell $w={40} $ml={15.5}><Chevron /></TrayCell>
        <TrayCell $w={40}><SyncIcon /></TrayCell>
        <TrayCell $w={40}><CloudIcon /></TrayCell>
        <TrayCell $w={56}><TrayText>ENG</TrayText></TrayCell>
        <TrayCell $w={30} $ml={4}><WifiIcon /></TrayCell>
        <TrayCell $w={30}><SoundIcon /></TrayCell>
        <TrayCell $w={30}><BatteryIcon /></TrayCell>
        <Clock><span>12:51 AM</span><span>12/14/2025</span></Clock>
        <NotifyBadge>1</NotifyBadge>
      </Taskbar>
    </Page>
  );
}
